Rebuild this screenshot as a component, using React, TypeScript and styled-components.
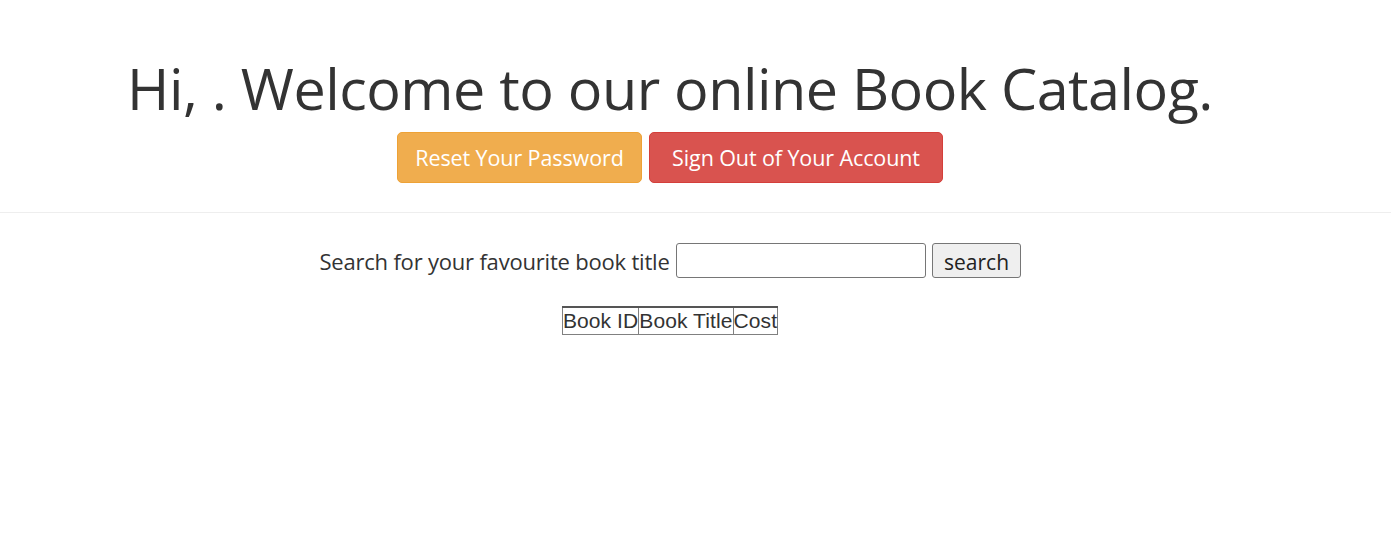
import React from "react";
import styled, { createGlobalStyle } from "styled-components";

const Global = createGlobalStyle`
  html, body { margin: 0; padding: 0; background: #fff; }
  body { font-family: "Open Sans", "Noto Sans", sans-serif; color: #333; }
`;

const Page = styled.div`
  width: 1340px;
`;

const Header = styled.header`
  display: flex;
  flex-direction: column;
  padding: 48px 0 29px;
  border-bottom: 1px solid #eee;
  width: 1391px;
`;

const HeaderInner = styled.div`
  width: 1340px;
  display: flex;
  flex-direction: column;
  align-items: center;
`;

const Title = styled.h1`
  margin: 0;
  font-family: "Open Sans", sans-serif;
  font-weight: 400;
  font-size: 57.5px;
  line-height: 80px;
  color: #333;
  letter-spacing: -0.5px;
  white-space: nowrap;
`;

const ButtonRow = styled.div`
  display: flex;
  gap: 7px;
  margin-top: 4px;
`;

const ActionButton = styled.button<{ $tone: "warning" | "danger"; $width: number }>`
  font-family: "Open Sans", sans-serif;
  font-size: 21.5px;
  letter-spacing: -0.1px;
  color: #fff;
  width: ${(p) => p.$width}px;
  height: 51px;
  padding: 0;
  border-radius: 5px;
  border: 1px solid ${(p) => (p.$tone === "warning" ? "#eea236" : "#d43f3a")};
  background: ${(p) => (p.$tone === "warning" ? "#f0ad4e" : "#d9534f")};
  cursor: pointer;
`;

const SearchForm = styled.form`
  display: flex;
  justify-content: center;
  align-items: center;
  gap: 6px;
  margin-top: 30px;
`;

const SearchLabel = styled.label`
  font-family: "Open Sans", sans-serif;
  font-size: 22px;
  letter-spacing: -0.2px;
  color: #333;
`;

const SearchInput = styled.input`
  width: 250px;
  height: 35px;
  box-sizing: border-box;
  border: 1px solid #767676;
  border-radius: 3px;
  padding: 0 4px;
  font-size: 18px;
`;

const SearchButton = styled.button`
  height: 35px;
  width: 89px;
  box-sizing: border-box;
  border: 1px solid #767676;
  border-radius: 3px;
  background: #efefef;
  font-family: "Open Sans", sans-serif;
  font-size: 21px;
  color: #222;
  padding: 0 0 0 1px;
  padding-top: 2px;
`;

const TableWrap = styled.div`
  display: flex;
  justify-content: center;
  margin-top: 28px;
`;

const Table = styled.table`
  border-collapse: collapse;
  border: 1px solid #808080;
  font-family: "Liberation Sans", Arial, sans-serif;
  font-size: 21px;
  color: #333;
`;

const HeadCell = styled.th`
  font-weight: 400;
  padding: 1px 0 1px;
  letter-spacing: 0.1px;
  border: 1px solid #808080;
  border-top: 2px solid #555;
  &:not(:first-child) { border-left: 1px solid #333; }
`;

export default function App() {
  return (
    <>
      <Global />
      <Header>
        <HeaderInner>
          <Title>Hi, . Welcome to our online Book Catalog.</Title>
          <ButtonRow>
            <ActionButton $tone="warning" $width={245}>Reset Your Password</ActionButton>
            <ActionButton $tone="danger" $width={294}>Sign Out of Your Account</ActionButton>
          </ButtonRow>
        </HeaderInner>
      </Header>
      <Page>
        <SearchForm onSubmit={(e) => e.preventDefault()}>
          <SearchLabel>Search for your favourite book title</SearchLabel>
          <SearchInput type="text" />
          <SearchButton type="submit">search</SearchButton>
        </SearchForm>
        <TableWrap>
          <Table>
            <thead>
              <tr>
                <HeadCell>Book ID</HeadCell>
                <HeadCell>Book Title</HeadCell>
                <HeadCell>Cost</HeadCell>
              </tr>
            </thead>
          </Table>
        </TableWrap>
      </Page>
    </>
  );
}
